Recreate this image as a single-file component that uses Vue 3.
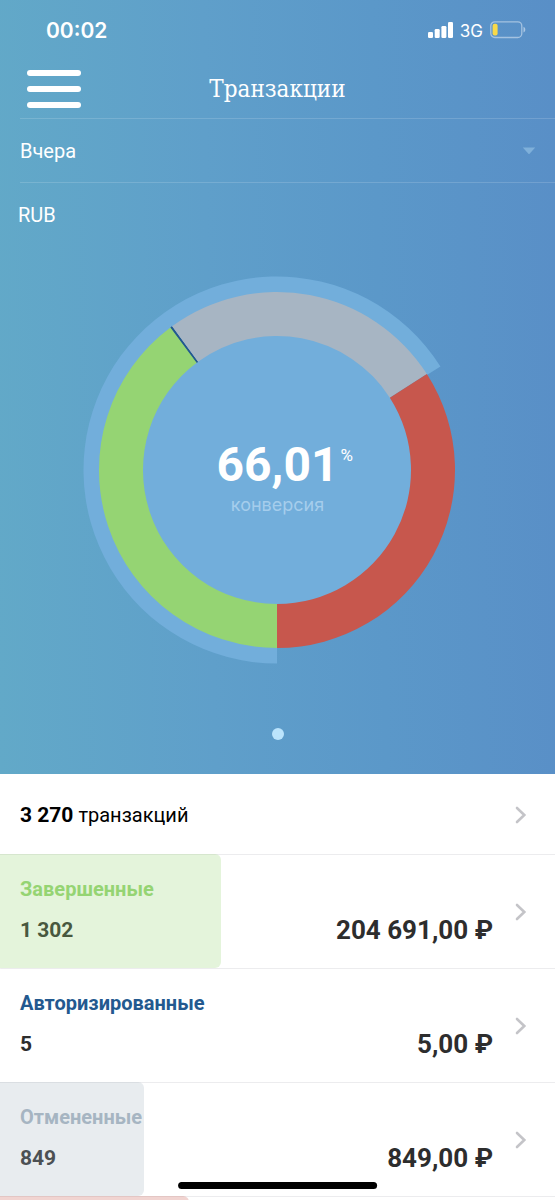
<script setup>
import { ref } from 'vue'

const period = ref('Вчера')
const total = 3270

const groups = [
  { id: 'done', name: 'Завершенные', count: 1302, label: '1 302', amount: '204 691,00 ₽', tint: '#95d473', title: '#95d473' },
  { id: 'auth', name: 'Авторизированные', count: 5, label: '5', amount: '5,00 ₽', tint: '#ffffff', title: '#23598f' },
  { id: 'void', name: 'Отмененные', count: 849, label: '849', amount: '849,00 ₽', tint: '#a7b5c3', title: '#a7b5c3' },
  { id: 'fail', name: '', count: 1114, label: '', amount: '', tint: '#c7574d', title: '#c7574d' },
]

const share = (g) => `${(g.count / total) * 100}%`

// Angles run clockwise and start at the bottom of the ring.
const C = 194
const point = (r, part) => {
  const a = Math.PI * (1 + 2 * part)
  return `${(C + r * Math.sin(a)).toFixed(2)} ${(C - r * Math.cos(a)).toFixed(2)}`
}
const band = (inner, outer, from, to) => {
  const large = to - from > 0.5 ? 1 : 0
  return `M${point(outer, from)}A${outer} ${outer} 0 ${large} 1 ${point(outer, to)}` +
    `L${point(inner, to)}A${inner} ${inner} 0 ${large} 0 ${point(inner, from)}Z`
}

const ringColors = ['#95d473', '#23598f', '#a7b5c3', '#c7574d']
let start = 0
const segments = groups.map((g, i) => {
  const from = start
  start += g.count / total
  return { d: band(134, 178, from, Math.min(start, 1)), color: ringColors[i] }
})
const halo = band(176, 193.5, 0, 0.6601)
const divider = `M${point(134, 1303 / total)}L${point(178, 1303 / total)}`
</script>

<template>
  <div class="page">
    <section class="hero">
      <div class="status">
        <span class="time">00:02</span>
        <div class="signals">
          <svg width="25" height="16" viewBox="0 0 25 16" fill="#fff" aria-hidden="true">
            <rect x="0" y="10" width="5" height="6" rx="1.3" />
            <rect x="6.7" y="7" width="5" height="9" rx="1.3" />
            <rect x="13.4" y="4" width="5" height="12" rx="1.3" />
            <rect x="20" y="0" width="5" height="16" rx="1.3" />
          </svg>
          <span class="network">3G</span>
          <svg width="36" height="18" viewBox="0 0 36 18" aria-hidden="true">
            <rect x=".8" y=".9" width="31" height="15.6" rx="4" fill="none" stroke="#fff" stroke-opacity=".45" stroke-width="1.3" />
            <path d="M33.5 5.8c2.4 1 2.4 4.8 0 5.8z" fill="#fff" fill-opacity=".5" />
            <rect x="2.6" y="2.8" width="5" height="11.8" rx="2" fill="#f8d948" />
          </svg>
        </div>
      </div>

      <header class="bar">
        <button class="menu" type="button" aria-label="Меню">
          <span></span><span></span><span></span>
        </button>
        <h1>Транзакции</h1>
      </header>

      <div class="period">
        <select v-model="period" aria-label="Период">
          <option>Вчера</option>
        </select>
        <svg class="caret" width="14" height="8" viewBox="0 0 14 8" aria-hidden="true">
          <path d="M.8.5h12.4L7.6 6.7q-.6.5-1.2 0z" fill="#7fb0da" />
        </svg>
      </div>

      <div class="currency">RUB</div>

      <div class="chart">
        <svg viewBox="0 0 389 388" aria-hidden="true">
          <circle cx="194" cy="194" r="135" fill="#72aedb" />
          <path :d="halo" fill="#72aedb" />
          <path v-for="s in segments" :key="s.color" :d="s.d" :fill="s.color" />
          <path :d="divider" stroke="#23598f" stroke-width="1.4" />
        </svg>
        <div class="center">
          <div class="value">66,01<sup>%</sup></div>
          <div class="caption">конверсия</div>
        </div>
      </div>

      <div class="dots"><span></span></div>
    </section>

    <nav class="list">
      <a class="row total" href="#all">
        <span><b>3 270</b> <span class="unit">транзакций</span></span>
        <svg class="chevron" width="12" height="18" viewBox="0 0 12 18" aria-hidden="true">
          <path d="M2 2l7.3 7L2 16" />
        </svg>
      </a>
      <a v-for="g in groups" :key="g.id" class="row group" :href="'#' + g.id">
        <span class="info">
          <span class="name" :style="{ color: g.title }">{{ g.name }}</span>
          <span class="count">{{ g.label }}</span>
        </span>
        <span class="amount">{{ g.amount }}</span>
        <svg class="chevron" width="12" height="18" viewBox="0 0 12 18" aria-hidden="true">
          <path d="M2 2l7.3 7L2 16" />
        </svg>
        <span class="fill" :style="{ width: share(g), background: g.tint }"></span>
      </a>
    </nav>

    <div class="home"></div>
  </div>
</template>

<style>
body {
  background: #fff;
}
</style>

<style scoped>
.page {
  position: relative;
  display: flex;
  flex-direction: column;
  height: 100vh;
  overflow: hidden;
  font-family: Roboto, "Noto Sans", sans-serif;
  color: #2d2d2d;
}
.hero {
  flex: none;
  background: linear-gradient(89deg, #62a9c8 0%, #5f9fca 38%, #5b98c9 68%, #598fc7 100%);
  color: #fff;
  padding-bottom: 34px;
}
.status {
  display: flex;
  align-items: center;
  justify-content: space-between;
  height: 60px;
  padding: 0 29px 0 46px;
}
.time {
  padding-top: 2px;
  font: 600 21px/24px Inter, sans-serif;
}
.signals {
  display: flex;
  align-items: center;
  gap: 7px;
}
.network {
  padding-top: 2px;
  font: 400 17px/20px Inter, sans-serif;
}
.bar {
  display: grid;
  grid-template-columns: 1fr auto 1fr;
  align-items: center;
  height: 58px;
}
.menu {
  display: flex;
  flex-direction: column;
  gap: 10px;
  width: 54px;
  margin-left: 27px;
  padding: 0;
  border: 0;
  background: none;
}
.menu span {
  height: 6px;
  border-radius: 3px;
  background: #fff;
}
h1 {
  margin: 0;
  font: 400 24px/30px "Roboto Slab", "DejaVu Serif Condensed", "DejaVu Serif", serif;
}
.period {
  display: flex;
  align-items: center;
  height: 63px;
  margin-left: 20px;
  padding-right: 19px;
  border: solid rgba(255, 255, 255, 0.15);
  border-width: 1px 0;
}
.period select {
  flex: 1;
  height: 40px;
  padding: 0;
  border: 0;
  appearance: none;
  background: none;
  color: #fff;
  font: 400 20px/24px Roboto, sans-serif;
}
.currency {
  padding: 20px 18px;
  font-size: 20px;
  line-height: 24px;
}
.chart {
  position: relative;
  width: 389px;
  max-width: 100%;
  margin: 29px auto 0;
}
.chart svg {
  display: block;
  width: 100%;
}
.center {
  position: absolute;
  inset: 0;
  display: flex;
  flex-direction: column;
  align-items: center;
  justify-content: center;
  padding-top: 14px;
}
.value {
  position: relative;
  font-size: 48px;
  font-weight: 700;
  line-height: 56px;
}
.value sup {
  position: absolute;
  left: 100%;
  top: 8px;
  padding-left: 2px;
  font-size: 17px;
  font-weight: 400;
  line-height: 20px;
}
.caption {
  font: 400 18px/24px Inter, sans-serif;
  color: #a5cdec;
}
.dots {
  display: flex;
  justify-content: center;
  padding-top: 64px;
}
.dots span {
  width: 12px;
  height: 12px;
  border-radius: 50%;
  background: #bbe4fc;
}
.list {
  flex: 1;
  min-height: 0;
  overflow: hidden;
}
.row {
  position: relative;
  display: flex;
  align-items: center;
  box-sizing: border-box;
  padding: 0 28px 0 20px;
  color: inherit;
  text-decoration: none;
}
.total {
  height: 80px;
  padding-top: 2px;
  color: #000;
  font-size: 20px;
  line-height: 24px;
}
.total b {
  font-size: 21px;
}
.chevron {
  flex: none;
  margin-left: auto;
  fill: none;
  stroke: #c4c4c8;
  stroke-width: 2.6;
  stroke-linecap: round;
  stroke-linejoin: miter;
}
.group {
  height: 114px;
  border-top: 1px solid #ececee;
}
.info {
  flex: 1;
  display: flex;
  flex-direction: column;
  gap: 16px;
  padding-bottom: 4px;
}
.name {
  font-size: 20px;
  font-weight: 700;
  line-height: 24px;
}
.count {
  font-size: 21px;
  font-weight: 700;
  line-height: 26px;
}
.amount {
  padding: 36px 22px 0 0;
  font: 700 26px/32px "Roboto Slab", Roboto, sans-serif;
}
.fill {
  position: absolute;
  left: 0;
  top: -1px;
  bottom: 0;
  border-radius: 0 6px 6px 0;
  opacity: 0.26;
}
.home {
  position: absolute;
  left: 50%;
  bottom: 11px;
  width: 36%;
  height: 7px;
  border-radius: 4px;
  background: #000;
  transform: translateX(-50%);
}
</style>
